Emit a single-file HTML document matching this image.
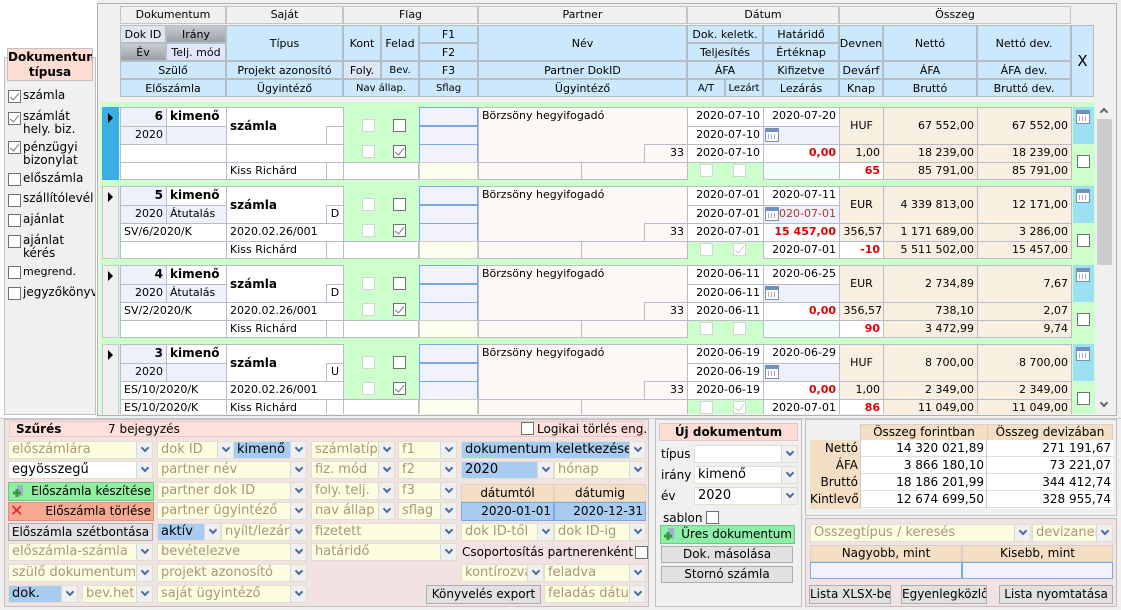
<!DOCTYPE html>
<html><head><meta charset="utf-8">
<style>
*{margin:0;padding:0;box-sizing:border-box}
html,body{width:1121px;height:610px;overflow:hidden}
body{background:#f0f0f0;font-family:"DejaVu Sans","Liberation Sans",sans-serif;font-size:11px;color:#000;position:relative}
.a{position:absolute;overflow:hidden;white-space:nowrap}
.h{position:absolute;background:#cce8fc;border:1px solid #b4bcc4;text-align:center;display:flex;align-items:center;justify-content:center;overflow:hidden;white-space:nowrap}
.g{position:absolute;background:#f0f0f0;border:1px solid #c4c4c4;text-align:center;line-height:16px;overflow:hidden}
.c{position:absolute;border:1px solid #b8bcc8;overflow:hidden;white-space:nowrap;padding:0 3px;line-height:16px}
.r{text-align:right}.ce{text-align:center}.b{font-weight:bold}
.wh{background:#fff}.lv{background:#eef0fc}.be{background:#f9efe0}.pk{background:#fdf8f5}.fy{background:#fdfdf0;border-color:#d0d0c0}
.fl{background:#f2f2ff;border-color:#7aa8e0}
.red{color:#e00000;font-weight:bold}
.ck{position:absolute;width:13px;height:13px;background:#fff;border:1px solid #707070}
.ck.d{border-color:#d4d4d4}
.ck.x:after{content:'';position:absolute;left:3px;top:0px;width:4px;height:8px;border-right:1.5px solid #777;border-bottom:1.5px solid #777;transform:rotate(40deg)}
.ck.d.x:after{border-color:#ccc}
.grn{position:absolute;background:#ccffcc}
.ind{position:absolute;left:102px;width:17px;background:#f0f0f0;border:1px solid #c8c8c8}
.ind:after{content:'';position:absolute;left:5px;top:5px;border-left:5px solid #000;border-top:5px solid transparent;border-bottom:5px solid transparent}
.cal{position:absolute;width:14px;height:14px;border:1px solid #7a90b0;background:#fff}
.cal:before{content:'';position:absolute;left:0;top:0;right:0;height:3px;background:#7090c0}
.cal:after{content:'';position:absolute;left:2px;top:5px;width:8px;height:5px;background:repeating-linear-gradient(90deg,#aab 0 1px,#fff 1px 3px)}
.cb{position:absolute;height:18px;background:#fdfde2;border:1px solid #e0e0d0;color:#a89878;font-size:13px;line-height:16px;padding-left:3px;overflow:hidden;white-space:nowrap}
.cb i{position:absolute;right:0;top:0;width:16px;height:16px;background:#f0f0f0;border-left:1px solid #d8d8d8}
.cb i:after{content:'';position:absolute;left:5px;top:3px;width:4px;height:4px;border-right:2px solid #4a6a9a;border-bottom:2px solid #4a6a9a;transform:rotate(45deg)}
.cb.bl{background:#a8ccf0;color:#000}
.cb.w{background:#fff;color:#000}
.btn{position:absolute;background:#e1e1e1;border:1px solid #adadad;text-align:center;font-size:12px;line-height:16px;white-space:nowrap;overflow:hidden}
.lt{position:absolute;left:23px;font-size:12px;line-height:13px;white-space:nowrap}
</style></head><body>

<!-- left panel -->
<div class="a" style="left:0;top:0;width:97px;height:418px;background:#fff"></div>
<div class="a" style="left:4px;top:57px;width:92px;height:358px;border:1px solid #c0c0c0;background:#f0f0f0"></div>
<div class="a b ce" style="left:7px;top:48px;width:86px;height:33px;background:#fddcd4;border:1px solid #c8c0c0;font-size:12px;line-height:15px;padding-top:1px">Dokumentun<br>típusa</div>
<span class="ck x" style="left:8px;top:90px"></span><div class="lt" style="top:89px">számla</div>
<span class="ck x" style="left:8px;top:112px"></span><div class="lt" style="top:110px">számlát<br>hely. biz.</div>
<span class="ck x" style="left:8px;top:141px"></span><div class="lt" style="top:141px">pénzügyi<br>bizonylat</div>
<span class="ck" style="left:8px;top:173px"></span><div class="lt" style="top:172px">előszámla</div>
<span class="ck" style="left:8px;top:194px"></span><div class="lt" style="top:192px">szállítólevél</div>
<span class="ck" style="left:8px;top:214px"></span><div class="lt" style="top:213px">ajánlat</div>
<span class="ck" style="left:8px;top:235px"></span><div class="lt" style="top:234px">ajánlat<br>kérés</div>
<span class="ck" style="left:8px;top:266px"></span><div class="lt" style="top:265px;font-size:11px">megrend.</div>
<span class="ck" style="left:8px;top:287px"></span><div class="lt" style="top:286px;width:72px;overflow:hidden">jegyzőkönyv</div>

<!-- main grid frame -->
<div class="a" style="left:97px;top:3px;width:1020px;height:413px;border:1px solid #b0b0b0;background:#f0f0f0"></div>

<!-- group header -->
<div class="g" style="left:120px;top:6px;width:106px;height:18px">Dokumentum</div>
<div class="g" style="left:226px;top:6px;width:117px;height:18px">Saját</div>
<div class="g" style="left:343px;top:6px;width:135px;height:18px">Flag</div>
<div class="g" style="left:478px;top:6px;width:209px;height:18px">Partner</div>
<div class="g" style="left:687px;top:6px;width:152px;height:18px">Dátum</div>
<div class="g" style="left:839px;top:6px;width:232px;height:18px">Összeg</div>

<div class="h" style="left:120px;top:25px;width:46px;height:18px;background:#dfe6ee">Dok ID</div>
<div class="h" style="left:166px;top:25px;width:60px;height:18px;background:linear-gradient(#c8ccd0,#9aa0a8)">Irány</div>
<div class="h" style="left:120px;top:43px;width:46px;height:18px;background:linear-gradient(#c8ccd0,#9aa0a8)">Év</div>
<div class="h" style="left:166px;top:43px;width:60px;height:18px;background:#e2e6fa">Telj. mód</div>
<div class="h" style="left:226px;top:25px;width:117px;height:36px">Típus</div>
<div class="h" style="left:343px;top:25px;width:38px;height:36px">Kont</div>
<div class="h" style="left:381px;top:25px;width:38px;height:36px">Felad</div>
<div class="h" style="left:419px;top:25px;width:59px;height:18px">F1</div>
<div class="h" style="left:419px;top:43px;width:59px;height:18px">F2</div>
<div class="h" style="left:478px;top:25px;width:209px;height:36px">Név</div>
<div class="h" style="left:687px;top:25px;width:76px;height:18px">Dok. keletk.</div>
<div class="h" style="left:687px;top:43px;width:76px;height:18px">Teljesítés</div>
<div class="h" style="left:763px;top:25px;width:76px;height:18px">Határidő</div>
<div class="h" style="left:763px;top:43px;width:76px;height:18px">Értéknap</div>
<div class="h" style="left:839px;top:25px;width:44px;height:36px">Devnen</div>
<div class="h" style="left:883px;top:25px;width:94px;height:36px">Nettó</div>
<div class="h" style="left:977px;top:25px;width:94px;height:36px">Nettó dev.</div>
<div class="h" style="left:1071px;top:25px;width:23px;height:72px;font-size:15px">X</div>

<div class="h" style="left:120px;top:61px;width:106px;height:18px">Szülő</div>
<div class="h" style="left:226px;top:61px;width:117px;height:18px">Projekt azonosító</div>
<div class="h" style="left:343px;top:61px;width:38px;height:18px;background:#dde6f8">Foly.</div>
<div class="h" style="left:381px;top:61px;width:38px;height:18px;font-size:10px">Bev.</div>
<div class="h" style="left:419px;top:61px;width:59px;height:18px">F3</div>
<div class="h" style="left:478px;top:61px;width:209px;height:18px">Partner DokID</div>
<div class="h" style="left:687px;top:61px;width:76px;height:18px">ÁFA</div>
<div class="h" style="left:763px;top:61px;width:76px;height:18px">Kifizetve</div>
<div class="h" style="left:839px;top:61px;width:44px;height:18px">Devárf</div>
<div class="h" style="left:883px;top:61px;width:94px;height:18px">ÁFA</div>
<div class="h" style="left:977px;top:61px;width:94px;height:18px">ÁFA dev.</div>

<div class="h" style="left:120px;top:79px;width:106px;height:18px">Előszámla</div>
<div class="h" style="left:226px;top:79px;width:117px;height:18px">Ügyintéző</div>
<div class="h" style="left:343px;top:79px;width:76px;height:18px;font-size:10px">Nav állap.</div>
<div class="h" style="left:419px;top:79px;width:59px;height:18px;font-size:10px">Sflag</div>
<div class="h" style="left:478px;top:79px;width:209px;height:18px">Ügyintéző</div>
<div class="h" style="left:687px;top:79px;width:38px;height:18px;font-size:10px">A/T</div>
<div class="h" style="left:725px;top:79px;width:38px;height:18px;font-size:10px">Lezárt</div>
<div class="h" style="left:763px;top:79px;width:76px;height:18px">Lezárás</div>
<div class="h" style="left:839px;top:79px;width:44px;height:18px">Knap</div>
<div class="h" style="left:883px;top:79px;width:94px;height:18px">Bruttó</div>
<div class="h" style="left:977px;top:79px;width:94px;height:18px">Bruttó dev.</div>

<!-- scrollbar -->
<div class="a" style="left:1096px;top:103px;width:17px;height:311px;background:#f0f0f0"></div>
<div class="a" style="left:1097px;top:119px;width:15px;height:146px;background:#cdcdcd"></div>
<div class="a" style="left:1101px;top:109px;width:6px;height:6px;border-left:2px solid #606060;border-top:2px solid #606060;transform:rotate(45deg)"></div>
<div class="a" style="left:1101px;top:400px;width:6px;height:6px;border-right:2px solid #606060;border-bottom:2px solid #606060;transform:rotate(45deg)"></div>

<!-- records -->
<div class="a" style="left:100px;top:101px;width:996px;height:313px">
<div style="position:absolute;left:-100px;top:-101px;width:1100px;height:414px;overflow:hidden">

<!-- R1 -->
<div class="grn" style="left:100px;top:102px;width:995px;height:83px"></div>
<div class="ind" style="top:107px;height:73px;background:#3caee6;border-color:#3caee6"></div>
<div class="c lv r b" style="left:120px;top:107px;width:47px;height:20px;font-size:12px">6</div>
<div class="c wh b" style="left:166px;top:107px;width:61px;height:20px;font-size:12px">kimenő</div>
<div class="c lv r" style="left:120px;top:126px;width:47px;height:19px">2020</div>
<div class="c lv" style="left:166px;top:126px;width:61px;height:19px"></div>
<div class="c wh b" style="left:226px;top:107px;width:118px;height:38px;line-height:36px;font-size:12px">számla</div>
<div class="c wh" style="left:326px;top:126px;width:18px;height:19px"></div>
<div class="c wh" style="left:120px;top:144px;width:107px;height:19px"></div>
<div class="c wh" style="left:226px;top:144px;width:118px;height:19px"></div>
<div class="c wh" style="left:120px;top:162px;width:107px;height:18px"></div>
<div class="c wh" style="left:226px;top:162px;width:101px;height:18px">Kiss Richárd</div>
<div class="c wh" style="left:326px;top:162px;width:18px;height:18px"></div>
<div class="c wh" style="left:343px;top:162px;width:76px;height:18px"></div>
<span class="ck d" style="left:362px;top:119px"></span><span class="ck" style="left:393px;top:119px"></span>
<span class="ck d" style="left:362px;top:145px"></span><span class="ck x" style="left:393px;top:145px"></span>
<div class="c fl" style="left:419px;top:107px;width:59px;height:19px"></div>
<div class="c fl" style="left:419px;top:126px;width:59px;height:19px"></div>
<div class="c fl" style="left:419px;top:144px;width:59px;height:19px"></div>
<div class="c fy" style="left:419px;top:162px;width:59px;height:18px"></div>
<div class="c pk" style="left:478px;top:107px;width:210px;height:56px">Börzsöny hegyifogadó</div>
<div class="c pk r" style="left:644px;top:144px;width:44px;height:19px">33</div>
<div class="c pk" style="left:478px;top:162px;width:104px;height:18px"></div>
<div class="c pk" style="left:581px;top:162px;width:107px;height:18px"></div>
<div class="c wh r" style="left:687px;top:107px;width:77px;height:20px">2020-07-10</div>
<div class="c wh r" style="left:687px;top:126px;width:77px;height:19px">2020-07-10</div>
<div class="c wh r" style="left:687px;top:144px;width:77px;height:19px">2020-07-10</div>
<span class="ck d" style="left:700px;top:164px"></span><span class="ck d" style="left:733px;top:164px"></span>
<div class="c wh r" style="left:763px;top:107px;width:77px;height:20px">2020-07-20</div>
<div class="c lv" style="left:763px;top:126px;width:77px;height:19px"></div><span class="cal" style="left:765px;top:128px"></span>
<div class="c wh r red" style="left:763px;top:144px;width:77px;height:19px">0,00</div>
<div class="c" style="left:763px;top:162px;width:77px;height:18px;background:#f4fcfc"></div>
<div class="c be ce" style="left:839px;top:107px;width:45px;height:38px;line-height:36px">HUF</div>
<div class="c be r" style="left:839px;top:144px;width:45px;height:19px">1,00</div>
<div class="c wh r red" style="left:839px;top:162px;width:45px;height:18px">65</div>
<div class="c be r" style="left:883px;top:107px;width:95px;height:38px;line-height:36px">67 552,00</div>
<div class="c be r" style="left:883px;top:144px;width:95px;height:19px">18 239,00</div>
<div class="c be r" style="left:883px;top:162px;width:95px;height:18px">85 791,00</div>
<div class="c be r" style="left:977px;top:107px;width:95px;height:38px;line-height:36px">67 552,00</div>
<div class="c be r" style="left:977px;top:144px;width:95px;height:19px">18 239,00</div>
<div class="c be r" style="left:977px;top:162px;width:95px;height:18px">85 791,00</div>
<div class="a" style="left:1073px;top:107px;width:21px;height:37px;background:#9ce0f4"></div><span class="cal" style="left:1076px;top:110px"></span>
<span class="ck" style="left:1077px;top:155px"></span>

<!-- R2 -->
<div class="grn" style="left:100px;top:184px;width:995px;height:80px"></div>
<div class="ind" style="top:186px;height:73px"></div>
<div class="c lv r b" style="left:120px;top:186px;width:47px;height:20px;font-size:12px">5</div>
<div class="c wh b" style="left:166px;top:186px;width:61px;height:20px;font-size:12px">kimenő</div>
<div class="c lv r" style="left:120px;top:205px;width:47px;height:19px">2020</div>
<div class="c lv" style="left:166px;top:205px;width:61px;height:19px">Átutalás</div>
<div class="c wh b" style="left:226px;top:186px;width:118px;height:38px;line-height:36px;font-size:12px">számla</div>
<div class="c wh ce" style="left:326px;top:205px;width:18px;height:19px">D</div>
<div class="c wh" style="left:120px;top:223px;width:107px;height:19px">SV/6/2020/K</div>
<div class="c wh" style="left:226px;top:223px;width:118px;height:19px">2020.02.26/001</div>
<div class="c wh" style="left:120px;top:241px;width:107px;height:18px"></div>
<div class="c wh" style="left:226px;top:241px;width:101px;height:18px">Kiss Richárd</div>
<div class="c wh" style="left:326px;top:241px;width:18px;height:18px"></div>
<div class="c wh" style="left:343px;top:241px;width:76px;height:18px"></div>
<span class="ck d" style="left:362px;top:198px"></span><span class="ck" style="left:393px;top:198px"></span>
<span class="ck d" style="left:362px;top:224px"></span><span class="ck x" style="left:393px;top:224px"></span>
<div class="c fl" style="left:419px;top:186px;width:59px;height:19px"></div>
<div class="c fl" style="left:419px;top:205px;width:59px;height:19px"></div>
<div class="c fl" style="left:419px;top:223px;width:59px;height:19px"></div>
<div class="c fy" style="left:419px;top:241px;width:59px;height:18px"></div>
<div class="c pk" style="left:478px;top:186px;width:210px;height:56px">Börzsöny hegyifogadó</div>
<div class="c pk r" style="left:644px;top:223px;width:44px;height:19px">33</div>
<div class="c pk" style="left:478px;top:241px;width:104px;height:18px"></div>
<div class="c pk" style="left:581px;top:241px;width:107px;height:18px"></div>
<div class="c wh r" style="left:687px;top:186px;width:77px;height:20px">2020-07-01</div>
<div class="c wh r" style="left:687px;top:205px;width:77px;height:19px">2020-07-01</div>
<div class="c wh r" style="left:687px;top:223px;width:77px;height:19px">2020-07-01</div>
<span class="ck d" style="left:700px;top:243px"></span><span class="ck d x" style="left:733px;top:243px"></span>
<div class="c wh r" style="left:763px;top:186px;width:77px;height:20px">2020-07-11</div>
<div class="c lv r" style="left:763px;top:205px;width:77px;height:19px;color:#a04030">2020-07-01</div><span class="cal" style="left:765px;top:207px"></span>
<div class="c wh r red" style="left:763px;top:223px;width:77px;height:19px">15 457,00</div>
<div class="c wh r" style="left:763px;top:241px;width:77px;height:18px">2020-07-01</div>
<div class="c be ce" style="left:839px;top:186px;width:45px;height:38px;line-height:36px">EUR</div>
<div class="c be r" style="left:839px;top:223px;width:45px;height:19px;padding:0 1px">356,57</div>
<div class="c wh r red" style="left:839px;top:241px;width:45px;height:18px">-10</div>
<div class="c be r" style="left:883px;top:186px;width:95px;height:38px;line-height:36px">4 339 813,00</div>
<div class="c be r" style="left:883px;top:223px;width:95px;height:19px">1 171 689,00</div>
<div class="c be r" style="left:883px;top:241px;width:95px;height:18px">5 511 502,00</div>
<div class="c be r" style="left:977px;top:186px;width:95px;height:38px;line-height:36px">12 171,00</div>
<div class="c be r" style="left:977px;top:223px;width:95px;height:19px">3 286,00</div>
<div class="c be r" style="left:977px;top:241px;width:95px;height:18px">15 457,00</div>
<div class="a" style="left:1073px;top:186px;width:21px;height:37px;background:#9ce0f4"></div><span class="cal" style="left:1076px;top:189px"></span>
<span class="ck" style="left:1077px;top:234px"></span>

<!-- R3 -->
<div class="grn" style="left:100px;top:263px;width:995px;height:80px"></div>
<div class="ind" style="top:265px;height:73px"></div>
<div class="c lv r b" style="left:120px;top:265px;width:47px;height:20px;font-size:12px">4</div>
<div class="c wh b" style="left:166px;top:265px;width:61px;height:20px;font-size:12px">kimenő</div>
<div class="c lv r" style="left:120px;top:284px;width:47px;height:19px">2020</div>
<div class="c lv" style="left:166px;top:284px;width:61px;height:19px">Átutalás</div>
<div class="c wh b" style="left:226px;top:265px;width:118px;height:38px;line-height:36px;font-size:12px">számla</div>
<div class="c wh ce" style="left:326px;top:284px;width:18px;height:19px">D</div>
<div class="c wh" style="left:120px;top:302px;width:107px;height:19px">SV/2/2020/K</div>
<div class="c wh" style="left:226px;top:302px;width:118px;height:19px">2020.02.26/001</div>
<div class="c wh" style="left:120px;top:320px;width:107px;height:18px"></div>
<div class="c wh" style="left:226px;top:320px;width:101px;height:18px">Kiss Richárd</div>
<div class="c wh" style="left:326px;top:320px;width:18px;height:18px"></div>
<div class="c wh" style="left:343px;top:320px;width:76px;height:18px"></div>
<span class="ck d" style="left:362px;top:277px"></span><span class="ck" style="left:393px;top:277px"></span>
<span class="ck d" style="left:362px;top:303px"></span><span class="ck x" style="left:393px;top:303px"></span>
<div class="c fl" style="left:419px;top:265px;width:59px;height:19px"></div>
<div class="c fl" style="left:419px;top:284px;width:59px;height:19px"></div>
<div class="c fl" style="left:419px;top:302px;width:59px;height:19px"></div>
<div class="c fy" style="left:419px;top:320px;width:59px;height:18px"></div>
<div class="c pk" style="left:478px;top:265px;width:210px;height:56px">Börzsöny hegyifogadó</div>
<div class="c pk r" style="left:644px;top:302px;width:44px;height:19px">33</div>
<div class="c pk" style="left:478px;top:320px;width:104px;height:18px"></div>
<div class="c pk" style="left:581px;top:320px;width:107px;height:18px"></div>
<div class="c wh r" style="left:687px;top:265px;width:77px;height:20px">2020-06-11</div>
<div class="c wh r" style="left:687px;top:284px;width:77px;height:19px">2020-06-11</div>
<div class="c wh r" style="left:687px;top:302px;width:77px;height:19px">2020-06-11</div>
<span class="ck d" style="left:700px;top:322px"></span><span class="ck d" style="left:733px;top:322px"></span>
<div class="c wh r" style="left:763px;top:265px;width:77px;height:20px">2020-06-25</div>
<div class="c lv" style="left:763px;top:284px;width:77px;height:19px"></div><span class="cal" style="left:765px;top:286px"></span>
<div class="c wh r red" style="left:763px;top:302px;width:77px;height:19px">0,00</div>
<div class="c" style="left:763px;top:320px;width:77px;height:18px;background:#f4fcfc"></div>
<div class="c be ce" style="left:839px;top:265px;width:45px;height:38px;line-height:36px">EUR</div>
<div class="c be r" style="left:839px;top:302px;width:45px;height:19px;padding:0 1px">356,57</div>
<div class="c wh r red" style="left:839px;top:320px;width:45px;height:18px">90</div>
<div class="c be r" style="left:883px;top:265px;width:95px;height:38px;line-height:36px">2 734,89</div>
<div class="c be r" style="left:883px;top:302px;width:95px;height:19px">738,10</div>
<div class="c be r" style="left:883px;top:320px;width:95px;height:18px">3 472,99</div>
<div class="c be r" style="left:977px;top:265px;width:95px;height:38px;line-height:36px">7,67</div>
<div class="c be r" style="left:977px;top:302px;width:95px;height:19px">2,07</div>
<div class="c be r" style="left:977px;top:320px;width:95px;height:18px">9,74</div>
<div class="a" style="left:1073px;top:265px;width:21px;height:37px;background:#9ce0f4"></div><span class="cal" style="left:1076px;top:268px"></span>
<span class="ck" style="left:1077px;top:313px"></span>

<!-- R4 -->
<div class="grn" style="left:100px;top:342px;width:995px;height:80px"></div>
<div class="ind" style="top:344px;height:73px"></div>
<div class="c lv r b" style="left:120px;top:344px;width:47px;height:20px;font-size:12px">3</div>
<div class="c wh b" style="left:166px;top:344px;width:61px;height:20px;font-size:12px">kimenő</div>
<div class="c lv r" style="left:120px;top:363px;width:47px;height:19px">2020</div>
<div class="c lv" style="left:166px;top:363px;width:61px;height:19px"></div>
<div class="c wh b" style="left:226px;top:344px;width:118px;height:38px;line-height:36px;font-size:12px">számla</div>
<div class="c wh ce" style="left:326px;top:363px;width:18px;height:19px">U</div>
<div class="c wh" style="left:120px;top:381px;width:107px;height:19px">ES/10/2020/K</div>
<div class="c wh" style="left:226px;top:381px;width:118px;height:19px">2020.02.26/001</div>
<div class="c wh" style="left:120px;top:399px;width:107px;height:18px">ES/10/2020/K</div>
<div class="c wh" style="left:226px;top:399px;width:101px;height:18px">Kiss Richárd</div>
<div class="c wh" style="left:326px;top:399px;width:18px;height:18px"></div>
<div class="c wh" style="left:343px;top:399px;width:76px;height:18px"></div>
<span class="ck d" style="left:362px;top:356px"></span><span class="ck" style="left:393px;top:356px"></span>
<span class="ck d" style="left:362px;top:382px"></span><span class="ck x" style="left:393px;top:382px"></span>
<div class="c fl" style="left:419px;top:344px;width:59px;height:19px"></div>
<div class="c fl" style="left:419px;top:363px;width:59px;height:19px"></div>
<div class="c fl" style="left:419px;top:381px;width:59px;height:19px"></div>
<div class="c fy" style="left:419px;top:399px;width:59px;height:18px"></div>
<div class="c pk" style="left:478px;top:344px;width:210px;height:56px">Börzsöny hegyifogadó</div>
<div class="c pk r" style="left:644px;top:381px;width:44px;height:19px">33</div>
<div class="c pk" style="left:478px;top:399px;width:104px;height:18px"></div>
<div class="c pk" style="left:581px;top:399px;width:107px;height:18px"></div>
<div class="c wh r" style="left:687px;top:344px;width:77px;height:20px">2020-06-19</div>
<div class="c wh r" style="left:687px;top:363px;width:77px;height:19px">2020-06-19</div>
<div class="c wh r" style="left:687px;top:381px;width:77px;height:19px">2020-06-19</div>
<span class="ck d" style="left:700px;top:401px"></span><span class="ck d x" style="left:733px;top:401px"></span>
<div class="c wh r" style="left:763px;top:344px;width:77px;height:20px">2020-06-29</div>
<div class="c lv" style="left:763px;top:363px;width:77px;height:19px"></div><span class="cal" style="left:765px;top:365px"></span>
<div class="c wh r red" style="left:763px;top:381px;width:77px;height:19px">0,00</div>
<div class="c wh r" style="left:763px;top:399px;width:77px;height:18px">2020-07-01</div>
<div class="c be ce" style="left:839px;top:344px;width:45px;height:38px;line-height:36px">HUF</div>
<div class="c be r" style="left:839px;top:381px;width:45px;height:19px">1,00</div>
<div class="c wh r red" style="left:839px;top:399px;width:45px;height:18px">86</div>
<div class="c be r" style="left:883px;top:344px;width:95px;height:38px;line-height:36px">8 700,00</div>
<div class="c be r" style="left:883px;top:381px;width:95px;height:19px">2 349,00</div>
<div class="c be r" style="left:883px;top:399px;width:95px;height:18px">11 049,00</div>
<div class="c be r" style="left:977px;top:344px;width:95px;height:38px;line-height:36px">8 700,00</div>
<div class="c be r" style="left:977px;top:381px;width:95px;height:19px">2 349,00</div>
<div class="c be r" style="left:977px;top:399px;width:95px;height:18px">11 049,00</div>
<div class="a" style="left:1073px;top:344px;width:21px;height:37px;background:#9ce0f4"></div><span class="cal" style="left:1076px;top:347px"></span>
<span class="ck" style="left:1077px;top:392px"></span>
</div></div>

<!-- bottom: filter panel -->
<div class="a" style="left:0;top:418px;width:1121px;height:192px;background:#f0f0f0;border-top:1px solid #c8c8c8"></div>
<div class="a" style="left:4px;top:419px;width:645px;height:188px;border:1px solid #c0c0c0;background:#f3e2e2"></div>
<div class="a" style="left:9px;top:421px;width:634px;height:16px;background:#fde0dc;border:1px solid #e8c8c8"></div>
<div class="a b" style="left:16px;top:422px;font-size:12px">Szűrés</div>
<div class="a" style="left:108px;top:422px;font-size:12px">7 bejegyzés</div>
<span class="ck" style="left:521px;top:422px"></span>
<div class="a" style="left:537px;top:422px;font-size:12px">Logikai törlés eng.</div>

<div class="cb" style="left:8px;top:441px;width:145px">előszámlára<i></i></div>
<div class="cb" style="left:157px;top:441px;width:77px">dok ID<i></i></div>
<div class="cb bl" style="left:233px;top:441px;width:74px">kimenő<i></i></div>
<div class="cb" style="left:311px;top:441px;width:84px">számlatíp<i></i></div>
<div class="cb" style="left:398px;top:441px;width:59px">f1<i></i></div>
<div class="cb bl" style="left:461px;top:441px;width:185px">dokumentum keletkezése<i></i></div>

<div class="cb w" style="left:8px;top:461px;width:145px">egyösszegű<i></i></div>
<div class="cb" style="left:157px;top:461px;width:150px">partner név<i></i></div>
<div class="cb" style="left:311px;top:461px;width:84px">fiz. mód<i></i></div>
<div class="cb" style="left:398px;top:461px;width:59px">f2<i></i></div>
<div class="cb bl" style="left:461px;top:461px;width:93px">2020<i></i></div>
<div class="cb" style="left:554px;top:461px;width:92px">hónap<i></i></div>

<div class="btn" style="left:8px;top:482px;width:146px;height:19px;background:#8ef09e;border-color:#6cc87c;text-align:right;padding-right:2px;line-height:17px">Előszámla készítése</div>
<div class="a" style="left:12px;top:485px;width:12px;height:13px"><svg width="12" height="13"><rect x="5" y="0" width="6" height="11" fill="#9ab0d0"/><path d="M1 8h8M5 4v8" stroke="#3a9a3a" stroke-width="3"/></svg></div>
<div class="cb" style="left:157px;top:482px;width:150px">partner dok ID<i></i></div>
<div class="cb" style="left:311px;top:482px;width:84px">foly. telj.<i></i></div>
<div class="cb" style="left:398px;top:482px;width:59px">f3<i></i></div>
<div class="a ce" style="left:461px;top:484px;width:93px;height:18px;background:#f5dfc4;border:1px solid #e0d0c0;font-size:12px;line-height:16px">dátumtól</div>
<div class="a ce" style="left:554px;top:484px;width:92px;height:18px;background:#f5dfc4;border:1px solid #e0d0c0;font-size:12px;line-height:16px">dátumig</div>

<div class="btn" style="left:8px;top:502px;width:146px;height:19px;background:#f7a890;border-color:#d8907c;text-align:right;padding-right:2px;line-height:17px">Előszámla törlése</div>
<div class="a" style="left:10px;top:503px;font-size:16px;color:#e02020;font-weight:bold;line-height:16px">✕</div>
<div class="cb" style="left:157px;top:502px;width:150px">partner ügyintéző<i></i></div>
<div class="cb" style="left:311px;top:502px;width:84px">nav állap<i></i></div>
<div class="cb" style="left:398px;top:502px;width:59px">sflag<i></i></div>
<div class="a r" style="left:461px;top:502px;width:93px;height:19px;background:#a8ccf0;border:1px solid #7aa8e0;font-size:12px;line-height:17px;padding-right:2px">2020-01-01</div>
<div class="a r" style="left:554px;top:502px;width:92px;height:19px;background:#a8ccf0;border:1px solid #7aa8e0;font-size:12px;line-height:17px;padding-right:2px">2020-12-31</div>

<div class="btn" style="left:8px;top:523px;width:145px;height:18px">Előszámla szétbontása</div>
<div class="cb bl" style="left:157px;top:523px;width:64px">aktív<i></i></div>
<div class="cb" style="left:221px;top:523px;width:86px">nyílt/lezárt<i></i></div>
<div class="cb" style="left:311px;top:523px;width:146px">fizetett<i></i></div>
<div class="cb" style="left:461px;top:523px;width:93px">dok ID-től<i></i></div>
<div class="cb" style="left:554px;top:523px;width:92px">dok ID-ig<i></i></div>

<div class="cb" style="left:8px;top:543px;width:145px">előszámla-számla<i></i></div>
<div class="cb" style="left:157px;top:543px;width:150px">bevételezve<i></i></div>
<div class="cb" style="left:311px;top:543px;width:146px">határidő<i></i></div>
<div class="a" style="left:462px;top:545px;font-size:12px">Csoportosítás partnerenként</div>
<span class="ck" style="left:635px;top:546px"></span>

<div class="cb" style="left:8px;top:564px;width:145px">szülő dokumentum<i></i></div>
<div class="cb" style="left:157px;top:564px;width:150px">projekt azonosító<i></i></div>
<div class="cb" style="left:461px;top:564px;width:83px">kontírozva<i></i></div>
<div class="cb" style="left:544px;top:564px;width:102px">feladva<i></i></div>

<div class="cb bl" style="left:8px;top:585px;width:70px">dok.<i></i></div>
<div class="cb" style="left:82px;top:585px;width:71px">bev.het<i></i></div>
<div class="cb" style="left:157px;top:585px;width:150px">saját ügyintéző<i></i></div>
<div class="btn" style="left:426px;top:585px;width:115px;height:19px">Könyvelés export</div>
<div class="cb" style="left:544px;top:585px;width:102px">feladás dátuma<i></i></div>

<!-- new document panel -->
<div class="a" style="left:655px;top:419px;width:147px;height:188px;border:1px solid #c0c0c0"></div>
<div class="a b ce" style="left:659px;top:423px;width:139px;height:18px;background:#fddcd4;border:1px solid #e0c8c8;font-size:12px;line-height:16px">Új dokumentum</div>
<div class="a" style="left:661px;top:447px;font-size:12px">típus</div>
<div class="cb w" style="left:694px;top:445px;width:104px">&nbsp;<i></i></div>
<div class="a" style="left:661px;top:468px;font-size:12px">irány</div>
<div class="cb w" style="left:694px;top:466px;width:104px">kimenő<i></i></div>
<div class="a" style="left:661px;top:489px;font-size:12px">év</div>
<div class="cb w" style="left:694px;top:487px;width:104px">2020<i></i></div>
<div class="a" style="left:663px;top:511px;font-size:12px">sablon</div>
<span class="ck" style="left:706px;top:511px"></span>
<div class="btn" style="left:660px;top:525px;width:135px;height:19px;background:#8ef0a8;border-color:#6cc88a;text-align:right;padding-right:2px;line-height:17px">Üres dokumentum</div>
<div class="a" style="left:663px;top:528px;width:12px;height:13px"><svg width="12" height="13"><rect x="5" y="0" width="6" height="11" fill="#9ab0d0"/><path d="M1 8h8M5 4v8" stroke="#3a9a3a" stroke-width="3"/></svg></div>
<div class="btn" style="left:661px;top:546px;width:132px;height:17px;line-height:15px">Dok. másolása</div>
<div class="btn" style="left:661px;top:566px;width:132px;height:17px;line-height:15px">Stornó számla</div>

<!-- summary -->
<div class="a" style="left:805px;top:419px;width:312px;height:97px;border:1px solid #c0c0c0"></div>
<div class="a ce" style="left:860px;top:424px;width:128px;height:17px;background:#f5dfc4;border:1px solid #d8d0c8;font-size:12px;line-height:15px">Összeg forintban</div>
<div class="a ce" style="left:987px;top:424px;width:126px;height:17px;background:#f5dfc4;border:1px solid #d8d0c8;font-size:12px;line-height:15px">Összeg devizában</div>
<div class="a" style="left:810px;top:440px;width:303px;height:69px;background:#fff"></div>
<div class="a r" style="left:810px;top:440px;width:50px;height:69px;background:#f5dfc4;font-size:12px;line-height:17px;padding-right:2px">Nettó<br>ÁFA<br>Bruttó<br>Kintlevő</div>
<div class="a r" style="left:860px;top:440px;width:127px;height:69px;font-size:12px;line-height:17px;padding-right:2px;border-left:1px solid #ccc;border-right:1px solid #ccc;background:repeating-linear-gradient(#fff 0 16px,#ddd 16px 17px)">14 320 021,89<br>3 866 180,10<br>18 186 201,99<br>12 674 699,50</div>
<div class="a r" style="left:987px;top:440px;width:126px;height:69px;font-size:12px;line-height:17px;padding-right:2px;background:repeating-linear-gradient(#fff 0 16px,#ddd 16px 17px)">271 191,67<br>73 221,07<br>344 412,74<br>328 955,74</div>

<div class="a" style="left:805px;top:518px;width:312px;height:89px;border:1px solid #c0c0c0;background:#f3e2e2"></div>
<div class="cb" style="left:810px;top:524px;width:221px;height:18px">Összegtípus / keresés<i></i></div>
<div class="cb" style="left:1032px;top:524px;width:81px">devizanem<i></i></div>
<div class="a ce" style="left:810px;top:545px;width:152px;height:17px;background:#f5dfc4;border:1px solid #d8d0c8;font-size:12px;line-height:15px">Nagyobb, mint</div>
<div class="a ce" style="left:962px;top:545px;width:151px;height:17px;background:#f5dfc4;border:1px solid #d8d0c8;font-size:12px;line-height:15px">Kisebb, mint</div>
<div class="a" style="left:810px;top:562px;width:152px;height:17px;background:#f2f2ff;border:1px solid #7aa8e0"></div>
<div class="a" style="left:962px;top:562px;width:151px;height:17px;background:#f2f2ff;border:1px solid #7aa8e0"></div>
<div class="btn" style="left:809px;top:585px;width:82px;height:19px">Lista XLSX-be</div>
<div class="btn" style="left:901px;top:585px;width:86px;height:19px">Egyenlegközlő</div>
<div class="btn" style="left:999px;top:585px;width:114px;height:19px">Lista nyomtatása</div>
</body></html>
